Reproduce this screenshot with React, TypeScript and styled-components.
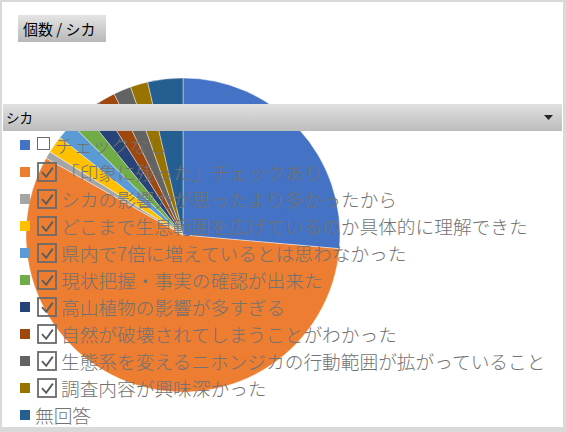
import React from "react";
import styled, { createGlobalStyle } from "styled-components";

const GlobalStyle = createGlobalStyle`
  html, body { margin: 0; padding: 0; background: #ffffff; }
  body { font-family: "Noto Sans CJK JP", "Noto Sans", sans-serif; }
`;

const Frame = styled.div`
  width: 566px;
  height: 432px;
  box-sizing: border-box;
  padding: 2px 3px 5px 2px;
  background: #d9d9d9;
`;

const ChartArea = styled.div`
  position: relative;
  width: 561px;
  height: 425px;
  background: #ffffff;
  overflow: hidden;
`;

const FieldButton = styled.div`
  display: flex;
  align-items: center;
  box-sizing: border-box;
  margin: 13px 0 0 16px;
  width: 88px;
  height: 27px;
  padding-left: 5px;
  background: linear-gradient(#e4e4e4, #b8b8b8);
  color: #000;
  font-family: "Noto Sans CJK JP", sans-serif;
  font-size: 15px;
  line-height: 1;
  white-space: nowrap;
`;

const PieCanvas = styled.svg`
  position: absolute;
  left: 24px;
  top: 76px;
  z-index: 0;
`;

const FilterBar = styled.div`
  position: relative;
  z-index: 1;
  display: flex;
  align-items: center;
  justify-content: space-between;
  box-sizing: border-box;
  margin: 62px 0 0 1px;
  width: 559px;
  height: 27px;
  padding: 0 9px 0 3px;
  background: linear-gradient(#e0e0e0, #bdbdbd);
  color: #000;
  font-family: "Noto Sans CJK JP", sans-serif;
  font-size: 13.5px;
  line-height: 1;
`;

const LegendList = styled.ul`
  position: relative;
  z-index: 1;
  list-style: none;
  margin: 0;
  padding: 0 0 0 18px;
`;

const Row = styled.li`
  display: flex;
  align-items: center;
  height: 27px;
  white-space: nowrap;
`;

const Marker = styled.span<{ $color: string }>`
  flex: none;
  width: 10px;
  height: 10px;
  background: ${(p) => p.$color};
  margin-right: 7px;
`;

const EmptyBox = styled.span`
  flex: none;
  box-sizing: border-box;
  width: 13px;
  height: 13px;
  border: 1.3px solid #6a6a6a;
  background: #fff;
  margin: 0 5px 2px 0;
`;

const CheckBox = styled.svg`
  flex: none;
  margin-right: 4px;
`;

const Label = styled.span<{ $plain?: boolean }>`
  font-family: "Noto Sans CJK JP", sans-serif;
  font-size: 18.7px;
  font-weight: 300;
  line-height: 27px;
  color: #727272;
  margin-left: ${(p) => (p.$plain ? "-2px" : "0")};
`;

type Slice = { color: string; a0: number; a1: number };

const slices: Slice[] = [
  { color: "#4472C4", a0: 0, a1: 95 },
  { color: "#ED7D31", a0: 95, a1: 299.3 },
  { color: "#A5A5A5", a0: 299.3, a1: 302 },
  { color: "#FFC000", a0: 302, a1: 308.4 },
  { color: "#5B9BD5", a0: 308.4, a1: 314.8 },
  { color: "#70AD47", a0: 314.8, a1: 321 },
  { color: "#264478", a0: 321, a1: 327.5 },
  { color: "#9E480E", a0: 327.5, a1: 334 },
  { color: "#636363", a0: 334, a1: 340.5 },
  { color: "#997300", a0: 340.5, a1: 347 },
  { color: "#255E91", a0: 347, a1: 360 },
];

type Item = { color: string; label: string; box: "checked" | "empty" | "none" };

const items: Item[] = [
  { color: "#4472C4", label: "チェックなし", box: "empty" },
  { color: "#ED7D31", label: "「印象に残った」チェックあり", box: "checked" },
  { color: "#A5A5A5", label: "シカの影響力が思ったより多かったから", box: "checked" },
  { color: "#FFC000", label: "どこまで生息範囲を広げているのか具体的に理解できた", box: "checked" },
  { color: "#5B9BD5", label: "県内で7倍に増えているとは思わなかった", box: "checked" },
  { color: "#70AD47", label: "現状把握・事実の確認が出来た", box: "checked" },
  { color: "#264478", label: "高山植物の影響が多すぎる", box: "checked" },
  { color: "#9E480E", label: "自然が破壊されてしまうことがわかった", box: "checked" },
  { color: "#636363", label: "生態系を変えるニホンジカの行動範囲が拡がっていること", box: "checked" },
  { color: "#997300", label: "調査内容が興味深かった", box: "checked" },
  { color: "#255E91", label: "無回答", box: "none" },
];

const R = 157;
const C = 157;

function pt(a: number): string {
  const rad = (a * Math.PI) / 180;
  const x = C + R * Math.sin(rad);
  const y = C - R * Math.cos(rad);
  return `${x.toFixed(2)} ${y.toFixed(2)}`;
}

function slicePath(s: Slice): string {
  const large = s.a1 - s.a0 > 180 ? 1 : 0;
  return `M ${C} ${C} L ${pt(s.a0)} A ${R} ${R} 0 ${large} 1 ${pt(s.a1)} Z`;
}

const Pie = () => (
  <PieCanvas width={314} height={314} viewBox="0 0 314 314">
    {slices.map((s, i) => (
      <path key={i} d={slicePath(s)} fill={s.color} stroke="#ffffff" strokeWidth={0.6} strokeOpacity={0.7} />
    ))}
  </PieCanvas>
);

const Checked = () => (
  <CheckBox width={20} height={20} viewBox="0 0 20 20">
    <rect x={1} y={1} width={18} height={18} fill="none" stroke="#6a6a6a" strokeWidth={1.8} />
    <path d="M5 10.2 L9.2 14.8 L15.8 5.6" fill="none" stroke="#5c5c5c" strokeWidth={1.9} strokeLinejoin="miter" />
  </CheckBox>
);

export default function App() {
  return (
    <>
      <GlobalStyle />
      <Frame>
        <ChartArea>
          <Pie />
          <FieldButton>個数 / シカ</FieldButton>
          <FilterBar>
            <span>シカ</span>
            <svg width={9} height={5} viewBox="0 0 9 5">
              <path d="M0 0 H9 L4.5 5 Z" fill="#262626" />
            </svg>
          </FilterBar>
          <LegendList>
            {items.map((it, i) => (
              <Row key={i}>
                <Marker $color={it.color} />
                {it.box === "checked" && <Checked />}
                {it.box === "empty" && <EmptyBox />}
                <Label $plain={it.box === "none"}>{it.label}</Label>
              </Row>
            ))}
          </LegendList>
        </ChartArea>
      </Frame>
    </>
  );
}
